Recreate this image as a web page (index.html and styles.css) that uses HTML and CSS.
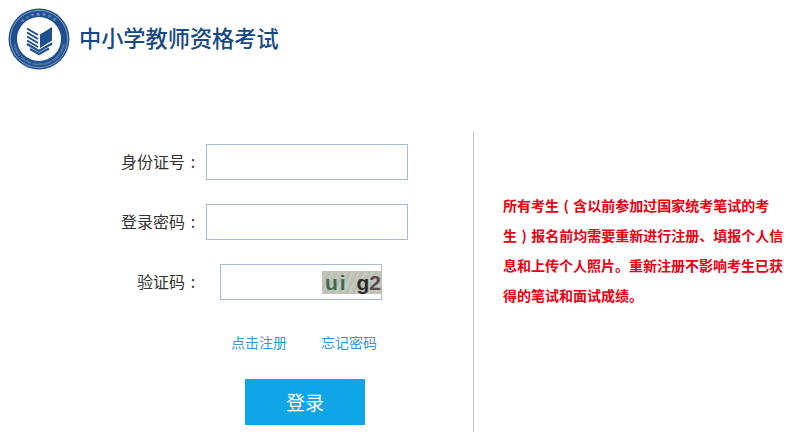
FILE: index.html
```html
<!DOCTYPE html>
<html lang="zh-CN">

<head>
    <meta charset="UTF-8">
    <meta name="viewport" content="width=device-width, initial-scale=1.0">
    <title>中小学教师资格考试</title>
    <link rel="stylesheet" href="styles.css">
</head>

<body>
    <header class="site-header">
        <svg class="logo" width="62" height="62" viewBox="0 0 62 62" aria-hidden="true">
            <defs>
                <path id="logoTop" d="M7.500 31a23.500 23.500 0 0 1 47 0"/>
                <path id="logoBottom" d="M4.500 31a26.500 26.500 0 0 0 53 0"/>
            </defs>
            <circle cx="31" cy="31" r="30.500" fill="#1f4f8f"/>
            <circle cx="31" cy="31" r="28.700" fill="none" stroke="#c9d6e6" stroke-width=".6"/>
            <circle cx="31" cy="31" r="22" fill="#fff"/>
            <text class="logo-text"><textPath href="#logoTop" startOffset="50%" text-anchor="middle">中小学教师资格</textPath></text>
            <text class="logo-text logo-text-en"><textPath href="#logoBottom" startOffset="50%" text-anchor="middle">Primary Teacher Certification Examination</textPath></text>
            <path d="M32 26.500 44 19V32.500L32 40Z" fill="#1f4f8f"/>
            <path d="M19 20.500 30 27M19 24.500 30 31M19 28.500 30 35M19 32.500 30 39" fill="none" stroke="#1f4f8f" stroke-width="2"/>
            <path d="M19 36 31 43 44 35.500M22 41 31 46 41 40.500" fill="none" stroke="#1f4f8f" stroke-width="2.200"/>
        </svg>
        <h1 class="site-title">中小学教师资格考试</h1>
    </header>

    <main class="login-wrap">
        <form class="login-form">
            <div class="form-row">
                <label class="form-label" for="idNumber">身份证号<span class="colon">:</span></label>
                <input class="form-input" type="text" id="idNumber" name="id_number">
            </div>
            <div class="form-row">
                <label class="form-label" for="password">登录密码<span class="colon">:</span></label>
                <input class="form-input" type="password" id="password" name="password">
            </div>
            <div class="form-row">
                <label class="form-label" for="captcha">验证码<span class="colon">:</span></label>
                <div class="captcha-box">
                    <input class="form-input captcha-input" type="text" id="captcha" name="captcha">
                    <span class="captcha-img"><span class="cg1">ui</span> <span class="cg2">g</span><span class="cg3">2</span></span>
                </div>
            </div>
            <div class="form-links">
                <a href="#">点击注册</a>
                <a href="#">忘记密码</a>
            </div>
            <button class="login-btn" type="button">登录</button>
        </form>

        <div class="notice">
            <p class="notice-line">所有考生<span class="paren">(</span>含以前参加过国家统考笔试的考</p>
            <p class="notice-line">生<span class="paren">)</span>报名前均需要重新进行注册、填报个人信</p>
            <p class="notice-line">息和上传个人照片。重新注册不影响考生已获</p>
            <p class="notice-line">得的笔试和面试成绩。</p>
        </div>
    </main>
</body>

</html>
```

FILE: styles.css
```css
body {
    margin: 0;
    background: #fff;
    font-family: "Noto Sans CJK SC", "Liberation Sans", sans-serif;
    color: #333;
}

.site-header {
    display: flex;
    align-items: center;
    height: 78px;
    padding-left: 8px;
}

.logo {
    flex: none;
}

.logo-text {
    font-size: 3.600px;
    fill: #a9bdd6;
    letter-spacing: 1.800px;
}

.logo-text-en {
    font-family: "Liberation Sans", sans-serif;
    font-size: 3.400px;
    letter-spacing: .2px;
}

.site-title {
    margin: -4px 0 0 9px;
    font-size: 22.200px;
    font-weight: 500;
    line-height: 30px;
    color: #174a82;
}

.login-wrap {
    display: flex;
    margin-top: 53px;
}

.login-form {
    width: 474px;
    height: 301px;
    box-sizing: border-box;
    padding-top: 13px;
    border-right: 1px solid #c8c8c8;
}

.form-row {
    display: flex;
    align-items: center;
    height: 36px;
    margin-bottom: 24px;
}

.form-label {
    width: 201px;
    padding-bottom: 2px;
    text-align: right;
    font-size: 16px;
    line-height: 34px;
}

.colon {
    display: inline-block;
    width: 16px;
    text-align: center;
}

.form-input {
    display: block;
    width: 202px;
    height: 36px;
    box-sizing: border-box;
    margin: 0 0 0 5px;
    padding: 0 8px;
    border: 1px solid #a9bccd;
    background: #fff;
}

.captcha-box {
    position: relative;
    margin-left: 19px;
}

.captcha-input {
    width: 162px;
    margin: 0;
}

/* picture code sits on top of the input */
.captcha-img {
    position: absolute;
    top: 7px;
    right: 0;
    width: 60px;
    height: 23px;
    background: repeating-linear-gradient(115deg, #c1c5ba 0, #b7bcb0 2px, #c9ccc3 4px, #bbbfb3 6px);
    font-family: "Liberation Sans", sans-serif;
    font-size: 21px;
    font-weight: bold;
    line-height: 23px;
    word-spacing: 3px;
    text-align: right;
    white-space: nowrap;
}

.cg1 {
    color: #3c6a52;
    letter-spacing: 2px;
}

.cg2 {
    color: #2b2b2b;
}

.cg3 {
    color: #5b4a50;
    margin-right: 1px;
}

.form-links {
    display: flex;
    gap: 34px;
    margin: 32px 0 0 231px;
    height: 20px;
    line-height: 20px;
    font-size: 14px;
}

.form-links a {
    color: #2c9bd3;
    text-decoration: none;
}

.login-btn {
    display: block;
    width: 120px;
    height: 46px;
    margin: 27px 0 0 245px;
    padding: 0 0 2px;
    border: none;
    background: #0fa5e6;
    color: #fff;
    font-family: inherit;
    font-size: 19px;
    cursor: pointer;
}

.notice {
    width: 282px;
    margin: 58.500px 0 0 29px;
    font-size: 14px;
    font-weight: bold;
    line-height: 30.300px;
    color: #e60012;
}

.notice-line {
    margin: 0;
    white-space: nowrap;
}

.paren {
    padding: 0 4.500px;
}
```
